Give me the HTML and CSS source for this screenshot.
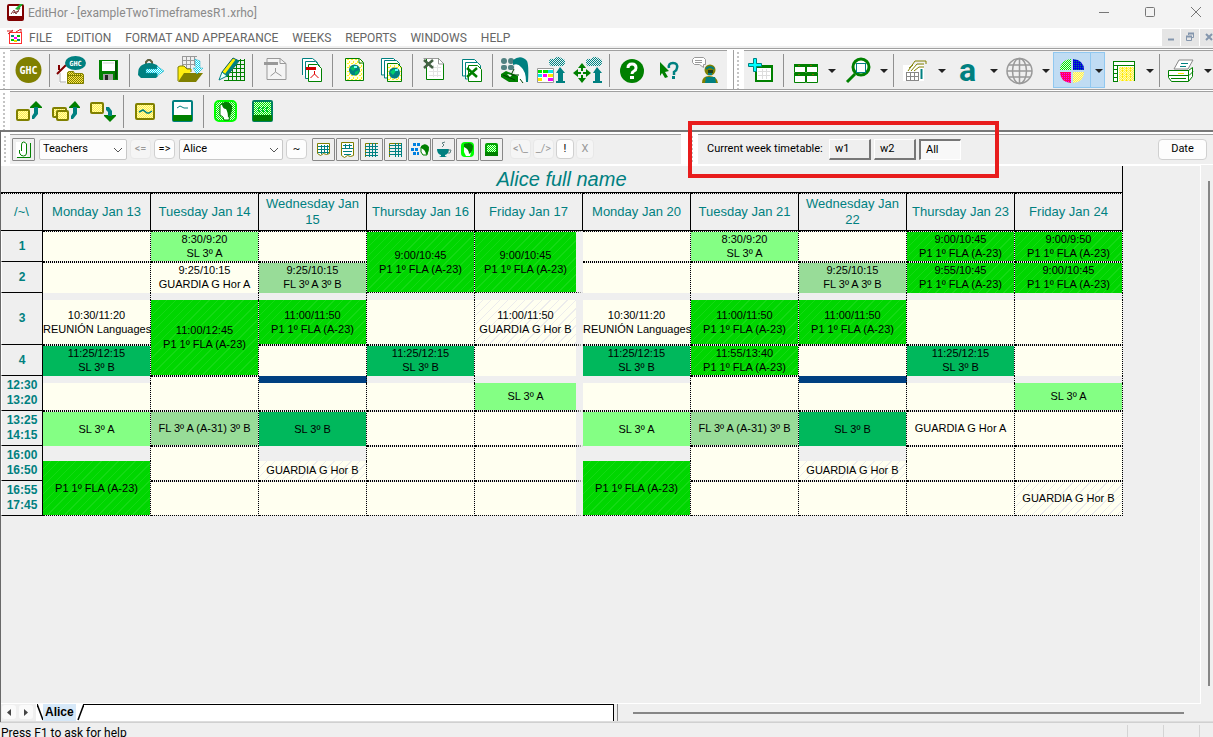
FILE: index.html
```html
<!DOCTYPE html>
<html lang="en">
<head>
<meta charset="utf-8">
<title>EditHor - [exampleTwoTimeframesR1.xrho]</title>
<link rel="stylesheet" href="styles.css">
</head>
<body>
<svg class="defs" width="0" height="0" aria-hidden="true">
  <defs>
    <pattern id="dy" width="2" height="2" patternUnits="userSpaceOnUse"><path fill="#fffbb0" d="M0 0h2v2H0z"/><path fill="#fff04a" d="M0 0h1v1H0zM1 1h1v1H1z"/></pattern>
    <pattern id="do" width="2" height="2" patternUnits="userSpaceOnUse"><path fill="#808000" d="M0 0h2v2H0z"/><path fill="#ffe84a" d="M0 0h1v1H0zM1 1h1v1H1z"/></pattern>
    <pattern id="dt" width="2" height="2" patternUnits="userSpaceOnUse"><path fill="#e8f4f4" d="M0 0h2v2H0z"/><path fill="#008080" d="M0 0h1v1H0zM1 1h1v1H1z"/></pattern>
    <pattern id="dc" width="2" height="2" patternUnits="userSpaceOnUse"><path fill="#ffffff" d="M0 0h2v2H0z"/><path fill="#00d8f0" d="M0 0h1v1H0zM1 1h1v1H1z"/></pattern>
    <pattern id="dg" width="2" height="2" patternUnits="userSpaceOnUse"><path fill="#d8ffd8" d="M0 0h2v2H0z"/><path fill="#00e000" d="M0 0h1v1H0zM1 1h1v1H1z"/></pattern>
    <pattern id="dn" width="2" height="2" patternUnits="userSpaceOnUse"><path fill="#0000e0" d="M0 0h2v2H0z"/><path fill="#008080" d="M0 0h1v1H0z"/></pattern>
    <pattern id="dr" width="2" height="2" patternUnits="userSpaceOnUse"><path fill="#ff0060" d="M0 0h2v2H0z"/><path fill="#ff00ff" d="M0 0h1v1H0z"/></pattern>
    <pattern id="page" width="4" height="4" patternUnits="userSpaceOnUse"><path fill="#ffffe0" d="M0 0h4v4H0z"/><path fill="#ffee20" d="M0 0h2v1H0zM2 2h1v2H2z"/></pattern>
  </defs>
</svg>

<header class="titlebar">
  <svg class="app-icon" width="17" height="17" viewBox="0 0 17 17"><rect x="1" y="1" width="15" height="15" rx="1" fill="#fff" stroke="#800000" stroke-width="2"/><path fill="#800000" d="M1 12h15v4H1z"/><path d="M4 10l3-4 2 4 4-6M6 9l6-2" stroke="#803030" fill="none"/><path d="M8 5l5-5h3l-5 6z" fill="#20b030"/></svg>
  <h1 class="title">EditHor - [exampleTwoTimeframesR1.xrho]</h1>
  <div class="window-buttons">
    <button aria-label="Minimize"><svg width="12" height="12" viewBox="0 0 12 12"><path d="M1 6.500h10" stroke="#777"/></svg></button>
    <button aria-label="Maximize"><svg width="12" height="12" viewBox="0 0 12 12"><rect x="1.500" y="1.500" width="9" height="9" rx="1" fill="none" stroke="#777"/></svg></button>
    <button aria-label="Close"><svg width="12" height="12" viewBox="0 0 12 12"><path d="M1 1l10 10M11 1L1 11" stroke="#777"/></svg></button>
  </div>
</header>

<nav class="menubar">
  <svg class="doc-icon" width="16" height="16" viewBox="0 0 16 16"><rect x="2.500" y="3.500" width="12" height="11" fill="#fff" stroke="#ff3030"/><path d="M0 2h6M1 5l5-4M9 3l5-3v3" stroke="#d02020" fill="none"/><path fill="#008080" d="M4 6h3v2H4zM10 10h3v2h-3z"/><path fill="#f0f" d="M7 8h3v2H7z"/><path fill="#00c000" d="M10 6h3v2h-3zM4 10h3v2H4z"/><path fill="#e8e000" d="M7 11h3v2H7z"/></svg>
  <a href="#file">FILE</a><a href="#edition">EDITION</a><a href="#format">FORMAT AND APPEARANCE</a><a href="#weeks">WEEKS</a><a href="#reports">REPORTS</a><a href="#windows">WINDOWS</a><a href="#help">HELP</a>
  <div class="mdi-buttons">
    <button aria-label="Minimize document"><svg width="10" height="10" viewBox="0 0 10 10"><path d="M2 7.500h6" stroke="#8496ad" stroke-width="2"/></svg></button>
    <button aria-label="Restore document"><svg width="10" height="10" viewBox="0 0 10 10"><path d="M3.500 3V1.500h5v4H7M1.500 4.500h5v4h-5z" fill="none" stroke="#8496ad"/><path d="M3 1.500h6M1 4.500h6" stroke="#8496ad" stroke-width="2"/></svg></button>
    <button aria-label="Close document"><svg width="10" height="10" viewBox="0 0 10 10"><path d="M2 2l6 6M8 2L2 8" stroke="#8496ad" stroke-width="2"/></svg></button>
  </div>
</nav>

<div class="toolbar">
  <div class="grip"></div>
  <div class="panel panel-main" role="toolbar" aria-label="Main">
    <button class="tool" aria-label="GHC"><svg width="31" height="30" viewBox="0 0 31 30"><circle cx="15.500" cy="15" r="13" fill="#808000"/><text x="15.500" y="19" class="ghc ghc-big">GHC</text></svg></button>
    <span class="sep"></span>
    <button class="tool" aria-label="Open GHC file"><svg width="31" height="30" viewBox="0 0 31 30"><path fill="#fff" d="M3 18l7-8 6 6v12H3z"/><path d="M1 19l9-9M3 10v5" stroke="#800000" stroke-width="2" fill="none"/><path d="M4 18v9h6" stroke="#aaa" fill="none"/><ellipse cx="19.500" cy="8" rx="10.500" ry="7" fill="#008080"/><text x="19.500" y="11" class="ghc">GHC</text><path d="M11.500 28.500v-11l1-1h5l1 2h8l1 1v9z" fill="url(#do)" stroke="#808000"/><path d="M11 20.500h14" stroke="#808000"/></svg></button>
    <button class="tool" aria-label="Save"><svg width="31" height="30" viewBox="0 0 31 30"><path fill="#008000" d="M6 5h19v20H7l-1-1z"/><path fill="#fff" d="M9 6h13v10H9z"/><path fill="#e8e8e8" d="M10 7h11v2H10z"/><path fill="#a0a0a0" d="M10 19h10v6H10z"/><path fill="#222" d="M12 20h3v5h-3z"/><path fill="#005000" d="M22 6h2v18h-2z"/></svg></button>
    <span class="sep"></span>
    <button class="tool" aria-label="Export bag"><svg width="31" height="30" viewBox="0 0 31 30"><path d="M10 10V7l2-2h2l2 2v3" fill="none" stroke="#606040" stroke-width="2"/><path fill="#008080" d="M6 10q7-4 15 0 2 3 1 11l-2 2H5l-3-3q0-8 4-10z"/><path fill="url(#dc)" stroke="#00a0b8" stroke-width=".5" d="M10 14h11v-3l7 5-7 5v-3H10z"/></svg></button>
    <button class="tool" aria-label="Import timetable"><svg width="31" height="30" viewBox="0 0 31 30"><path d="M9.500 1v13M13.500 1v13M17.500 1v13M21.500 1v10M9 1.500h15M9 5.500h13M9 9.500h13M9 13.500h8" stroke="#999" fill="none"/><path d="M5 26V12l2-1h4l3 3h4v3" fill="#ffee10" stroke="#808000"/><path fill="#808000" d="M5 27l6-9h19l-7 9z"/><path fill="url(#dc)" stroke="#20b0c8" stroke-width=".5" d="M22 4l5 2v7h3l-6 6-4-6h3z"/></svg></button>
    <span class="sep"></span>
    <button class="tool" aria-label="Edit timetable"><svg width="31" height="30" viewBox="0 0 31 30"><path d="M12.500 26V12M16.500 26V8M20.500 26V6M24.500 26V4M28.500 26V4M8 25.500h21M9 21.500h20M12 17.500h17M15 13.500h14M18 9.500h11M20 5.500h9" stroke="#008000" fill="none"/><path fill="#ffee00" stroke="#006060" d="M6 17L17 3l6 3-12 15z"/><path fill="#008080" d="M9 19L20 4l3 2-12 15z"/><path fill="#e8ffff" stroke="#008080" d="M6 17l5 4-8 4z"/></svg></button>
    <span class="sep"></span>
    <button class="tool" aria-label="Export PDF"><svg width="31" height="30" viewBox="0 0 31 30"><path d="M8 3.500h13l6 5v16H8z" fill="#f4f4f4" stroke="#999"/><path d="M21 3.500v5h6" fill="none" stroke="#999"/><path fill="#999" d="M5 7h14v3H5z"/><path d="M16.500 13v4l-5 4M16.500 17l6 4" stroke="#999" fill="none"/></svg></button>
    <button class="tool" aria-label="Export several PDF"><svg width="31" height="30" viewBox="0 0 31 30"><path d="M6.500 20V3.500h10l5 4v14h-12" fill="#fff" stroke="#008080"/><path d="M9.500 23V6.500h10l4 4v13h-14z" fill="#fff" stroke="#008080"/><path d="M12.500 9.500h9l4 4v13h-13z" fill="#fff" stroke="#008000"/><path fill="#d00000" d="M10 12h10v3H10z"/><path d="M18.500 16v3l-4 4M18.500 19l4 4" stroke="#e00000" fill="none"/></svg></button>
    <span class="sep"></span>
    <button class="tool" aria-label="Export web page"><svg width="31" height="30" viewBox="0 0 31 30"><path d="M6.500 3.500h14l4 4v18h-18z" fill="url(#page)" stroke="#008000"/><path d="M20 4v4h4" fill="#fff" stroke="#008000"/><circle cx="15.500" cy="15" r="5.500" fill="#008080"/><path fill="#00c060" d="M11 13l4-2 2 2-3 3zM16 17l4-2-1 3-3 2z"/><path fill="#80ffff" d="M15 11h3v2h-3z"/></svg></button>
    <button class="tool" aria-label="Export several web pages"><svg width="31" height="30" viewBox="0 0 31 30"><path d="M5.500 20V3.500h12l3 3v13z" fill="#fff" stroke="#008080"/><path d="M8.500 23V5.500h12l3 3v14z" fill="#fff" stroke="#008080"/><path d="M11.500 8.500h10l4 4v14h-14z" fill="url(#page)" stroke="#008000"/><circle cx="18.500" cy="18" r="5.500" fill="#008080"/><path fill="#00d070" d="M14 17l4-3 2 2-3 4z"/><path fill="#60ffff" d="M19 14h3v2h-3z"/></svg></button>
    <span class="sep"></span>
    <button class="tool" aria-label="Export spreadsheet"><svg width="31" height="30" viewBox="0 0 31 30"><path d="M7.500 3.500h12l5 5v16h-17z" fill="#fff" stroke="#008000"/><path d="M4.500 3.500h15l5 5" fill="none" stroke="#999"/><path d="M19.500 4v5h5" fill="none" stroke="#999"/><path d="M10 12.500h12M10 16.500h12M10 20.500h12M14.500 10v12M18.500 10v12" stroke="#e4e4e4"/><path d="M5 5l9 8M14 5l-9 8" stroke="#446044" stroke-width="2.500"/></svg></button>
    <button class="tool" aria-label="Export several spreadsheets"><svg width="31" height="30" viewBox="0 0 31 30"><path d="M6.500 21V4.500h12l3 3v13z" fill="#fff" stroke="#008080"/><path d="M9.500 24V7.500h12l3 3v13z" fill="#fff" stroke="#008080"/><path d="M12.500 26.500v-16h9l4 4v12z" fill="#fff" stroke="#008000"/><path d="M11 13l10 9M21 13l-10 9" stroke="#008000" stroke-width="2.500"/></svg></button>
    <span class="sep"></span>
    <button class="tool" aria-label="Teachers"><svg width="31" height="30" viewBox="0 0 31 30"><g fill="#508080"><circle cx="5" cy="6" r="3"/><circle cx="12" cy="6" r="3"/><rect x="2" y="10" width="6" height="5" rx="2"/><rect x="9" y="10" width="6" height="5" rx="2"/></g><path fill="#fff" d="M16 6l6-2 6 10v13H16z"/><path fill="#008080" d="M14 5q8-6 14 1 2 4 1 21h-2q0-11-5-15-3-4-8-2z"/><path fill="#008000" d="M2 19l5-3 12 5v6H10l-8-5z"/><path d="M4 20l12 5M15 14l-3 6h8M21 24l3 4" stroke="#004000" fill="none"/><path fill="#fff" d="M8 19l5 1-2 2z"/></svg></button>
    <button class="tool" aria-label="Upload timetable"><svg width="31" height="30" viewBox="0 0 31 30"><path fill="#fff" stroke="#999" d="M1.500 13.500h16v14h-16z"/><path fill="#00e000" d="M2 15h4v3H2zM7 15h5v3H7z"/><path fill="#00e8e8" d="M12 15h5v3h-5zM2 19h4v3H2z"/><path fill="#f0f" d="M7 19h4v3H7zM12 23h5v3h-5z"/><path fill="#ffe800" d="M12 19h5v3h-5zM2 23h4v3H2z"/><path fill="url(#dt)" d="M13 7q0-4 5-3 4-4 7-1 5 1 4 5-1 4-6 3h-5q-5 1-5-4z"/><path fill="#008080" d="M24 12l5 6h-2v8h2v2h-9v-2h2v-8h-2z"/></svg></button>
    <button class="tool" aria-label="Upload assignment"><svg width="31" height="30" viewBox="0 0 31 30"><g fill="#008000"><path d="M9 8l4 5h-3v3H8v-3H5z"/><path d="M9 28l4-5h-3v-3H8v3H5z"/><path d="M0 18l5-4v3h3v2H5v3z"/><path d="M18 18l-5-4v3h-3v2h3v3z"/></g><path fill="url(#dt)" d="M13 7q0-4 5-3 4-4 7-1 5 1 4 5-1 4-6 3h-5q-5 1-5-4z"/><path fill="#008080" d="M24 12l5 6h-2v8h2v2h-9v-2h2v-8h-2z"/></svg></button>
    <span class="sep"></span>
    <button class="tool" aria-label="Help"><svg width="31" height="30" viewBox="0 0 31 30"><circle cx="16" cy="16" r="12" fill="#008000"/><path d="M12 13q0-4 4-4t4 4q0 2-2 3t-2 3" fill="none" stroke="#fff" stroke-width="3"/><path fill="#fff" d="M14 21h4v3h-4z"/></svg></button>
    <button class="tool" aria-label="Context help"><svg width="31" height="30" viewBox="0 0 31 30"><path fill="#008000" d="M7 7l9 9-4 1 3 5-3 1-3-5-2 3z"/><path d="M16 13q-1-5 4-5t4 5q0 2-3 4v3" fill="none" stroke="#008080" stroke-width="2.500"/><path fill="#008080" d="M19 21h3v3h-3z"/></svg></button>
    <button class="tool" aria-label="Support"><svg width="31" height="30" viewBox="0 0 31 30"><path fill="#fff" stroke="#999" d="M4.500 2.500h9l2 2v5h-2v3l-4-3h-5l-2-2v-3z"/><path d="M5 5.500h7M5 7.500h7" stroke="#999"/><circle cx="20" cy="15" r="5.500" fill="#808000"/><path d="M16 14q4-4 8 0M18 19h4" stroke="#008080" stroke-width="2" fill="none"/><path fill="#204020" d="M18 15h5v3h-5z"/><path fill="#808000" d="M12 28q0-7 7-7 8 0 9 7z"/><path fill="#008080" d="M16 22h9l1 6H15z"/></svg></button>
  </div>
  <div class="grip grip-second"></div>
  <div class="panel panel-wide" role="toolbar" aria-label="View">
    <button class="tool" aria-label="New timetable"><svg width="31" height="30" viewBox="0 0 31 30"><rect x="9" y="11" width="16" height="15" fill="#fff" stroke="#008000" stroke-width="2"/><path fill="#008000" d="M8 10h18v3H8z"/><path d="M11 16.500h12M11 20.500h12M15.500 14v10M19.500 14v10" stroke="#ddd"/><path fill="#00ffff" stroke="#008080" d="M6.500 3.500h3v5h5v3h-5v5h-3v-5h-5v-3h5z"/></svg></button>
    <span class="sep"></span>
    <span class="split"><button class="tool" aria-label="Window layout"><svg width="31" height="30" viewBox="0 0 31 30"><g fill="#fff" stroke="#008000"><path d="M4.500 9.500h11v8h-11zM16.500 9.500h11v8h-11zM4.500 19.500h11v8h-11zM16.500 19.500h11v8h-11z"/></g><path fill="#008000" d="M4 9h24v3H4zM4 18h24v3H4z"/><path fill="#806000" d="M8 10h2v1H8zM20 10h2v1h-2zM8 19h2v1H8zM22 19h2v1h-2z"/></svg></button><button class="arrow" aria-label="Window layout options"></button></span>
    <span class="split"><button class="tool" aria-label="Zoom"><svg width="31" height="30" viewBox="0 0 31 30"><circle cx="19" cy="12" r="8" fill="#fff" stroke="#008000" stroke-width="3"/><rect x="14.500" y="8.500" width="9" height="9" fill="#fff" stroke="#008080"/><path d="M13 19l-8 8" stroke="#008000" stroke-width="3"/></svg></button><button class="arrow" aria-label="Zoom options"></button></span>
    <span class="sep"></span>
    <span class="split"><button class="tool" aria-label="Properties"><svg width="31" height="30" viewBox="0 0 31 30"><path fill="#fff" d="M3 10h21v16H3z"/><path d="M6.500 17v9M10.500 17v9M14.500 17v9M18.500 17v9M6 17.500h13M6 21.500h13M6 25.500h13" stroke="#888"/><path d="M21.500 14v10" stroke="#008080" stroke-width="2"/><path d="M8 16l7-10h11M11 16l6-7h7M14 16l5-4h5M9 13l4-3M26 6v3" fill="none" stroke="#808000"/></svg></button><button class="arrow" aria-label="Properties options"></button></span>
    <span class="split"><button class="tool" aria-label="Font"><svg width="31" height="30" viewBox="0 0 31 30"><text x="15.500" y="26" class="letter">a</text></svg></button><button class="arrow" aria-label="Font options"></button></span>
    <span class="split"><button class="tool" aria-label="Language"><svg width="31" height="30" viewBox="0 0 31 30"><g fill="none" stroke="#999" stroke-width="1.500"><circle cx="15.500" cy="16" r="12.500"/><ellipse cx="15.500" cy="16" rx="7" ry="12.500"/><path d="M15.500 3v26M3 16h25M5 10h21M5 22h21"/></g></svg></button><button class="arrow" aria-label="Language options"></button></span>
    <span class="split split-active"><button class="tool" aria-label="Colours"><svg width="31" height="30" viewBox="0 0 31 30"><path fill="url(#dg)" d="M15 15H4Q4 5 15 4z"/><path fill="url(#dn)" d="M17 15h11Q28 5 17 4z"/><path fill="url(#dr)" d="M15 17H4q0 10 11 11z"/><path fill="url(#dy)" d="M17 17h11q0 10-11 11z"/></svg></button><button class="arrow" aria-label="Colours options"></button></span>
    <span class="split"><button class="tool" aria-label="Columns"><svg width="31" height="30" viewBox="0 0 31 30"><path fill="#fff" d="M5 6h22v20H5z"/><path fill="url(#dy)" d="M11 12h15v14H11z"/><path d="M14.500 12v14M18.500 12v14M22.500 12v14" stroke="#ffe800" stroke-dasharray="2 1"/><path d="M5 6.500h22M5 10.500h22M5.500 6v20M9.500 10v16M26.500 6v20M5 14.500h4M5 18.500h4M5 22.500h4M5 26.500h5" stroke="#008000" fill="none"/></svg></button><button class="arrow" aria-label="Columns options"></button></span>
    <span class="sep"></span>
    <span class="split"><button class="tool" aria-label="Print"><svg width="31" height="30" viewBox="0 0 31 30"><path fill="#fff" stroke="#888" d="M8 14l5-9h14l-5 9z"/><path d="M15 8.500h7M14 11.500h6" stroke="#008080"/><path fill="#fff" stroke="#008000" d="M2.500 15.500h20l4-3v9l-4 5h-17l-3-4z"/><path d="M3 15.500h20M3 20.500h20l4-4M22.500 16v10M5 23.500h15" stroke="#008000" fill="none"/><path fill="#ffe800" d="M12 18h6v1h-6z"/></svg></button><button class="arrow" aria-label="Print options"></button></span>
  </div>
</div>

<div class="toolbar">
  <div class="grip"></div>
  <div class="panel panel-wide" role="toolbar" aria-label="Sessions">
    <button class="tool" aria-label="Raise session"><svg width="31" height="30" viewBox="0 0 31 30"><rect x="4" y="14" width="12" height="10" rx="1" fill="url(#dy)" stroke="#808000" stroke-width="2"/><path fill="#008000" d="M23 5l6 6v1H17v-1z"/><path fill="#008080" d="M21 11h4v7l-4 5h-2v-3l2-3z"/></svg></button>
    <button class="tool" aria-label="Raise group"><svg width="31" height="30" viewBox="0 0 31 30"><rect x="3" y="12" width="13" height="9" rx="1" fill="url(#dy)" stroke="#808000" stroke-width="2"/><rect x="7" y="15" width="11" height="9" rx="1" fill="url(#dy)" stroke="#808000" stroke-width="2"/><path fill="#008000" d="M25 5l5 6v1H19v-1z"/><path fill="#008080" d="M23 11h4v7l-4 5h-2v-3l2-3z"/></svg></button>
    <button class="tool" aria-label="Lower session"><svg width="31" height="30" viewBox="0 0 31 30"><rect x="4" y="7" width="12" height="10" rx="1" fill="url(#dy)" stroke="#808000" stroke-width="2"/><path fill="#008000" d="M23 26l6-6v-1H17v1z"/><path fill="#008080" d="M19 11h3l3 4v5h-4v-4l-2-2z"/></svg></button>
    <span class="sep"></span>
    <button class="tool" aria-label="Mark session"><svg width="31" height="30" viewBox="0 0 31 30"><rect x="6" y="8" width="18" height="15" rx="1" fill="url(#dy)" stroke="#808000" stroke-width="2"/><path d="M9 16l4-2 4 3h2l3-2" stroke="#008080" stroke-width="1.500" fill="none"/></svg></button>
    <button class="tool" aria-label="Session card"><svg width="31" height="30" viewBox="0 0 31 30"><rect x="6" y="5" width="19" height="20" rx="1" fill="#fff" stroke="#008080" stroke-width="2"/><path fill="#008000" d="M6 19h19v6H6z"/><path d="M10 12l3-2 4 2h4" stroke="#008080" fill="none"/></svg></button>
    <span class="sep"></span>
    <button class="tool" aria-label="Teacher view"><svg width="31" height="30" viewBox="0 0 31 30"><rect x="5" y="5" width="21" height="20" rx="4" fill="url(#dg)" stroke="#00ff00" stroke-width="2"/><path fill="#fff" stroke="#008000" d="M10 9l6-3 5 8-2 10h-5l-1-3-3-2z"/><path fill="#008000" d="M11 8q8-5 11 2 1 6-4 12 0-6-2-9-3 0-4-4z"/></svg></button>
    <button class="tool" aria-label="Room view"><svg width="31" height="30" viewBox="0 0 31 30"><rect x="6" y="5" width="19" height="20" rx="1" fill="url(#dg)" stroke="#008060" stroke-width="2"/><path fill="#008000" d="M6 19h19v6H6z"/><path d="M9 11l2 2 2-2 2 2 2-2 2 2 2-2M9 16l2-2 2 2 2-2 2 2 2-2 2 2" stroke="#00c040" fill="none"/></svg></button>
  </div>
</div>

<div class="viewbar">
  <div class="grip"></div>
  <div class="view-panel view-main">
    <button class="boxed clip" aria-label="Attach"><svg width="21" height="21" viewBox="0 0 21 21"><path fill="#fff" d="M3 3h11v15H3z"/><path d="M17.500 4v14.500H4" stroke="#008000" fill="none"/><path d="M6.500 11v3q1 3 4 3t3-3V5q-1-2-3-2t-2 3v6" stroke="#008000" fill="none"/></svg></button>
    <span class="combo combo-kind"><select aria-label="Kind"><option>Teachers</option></select><svg width="10" height="6" viewBox="0 0 10 6"><path d="M1 1l4 4 4-4" fill="none" stroke="#555"/></svg></span>
    <button class="key" disabled>&lt;=</button>
    <button class="key">=&gt;</button>
    <span class="combo combo-name"><select aria-label="Teacher"><option>Alice</option></select><svg width="10" height="6" viewBox="0 0 10 6"><path d="M1 1l4 4 4-4" fill="none" stroke="#555"/></svg></span>
    <button class="key">~</button>
    <div class="view-icons">
      <button class="boxed" aria-label="Weekly grid"><svg width="21" height="21" viewBox="0 0 21 21"><path fill="#fff" stroke="#808000" d="M4.500 4.500h12v10l-3 1-3-1-3 2-3-2z"/><path d="M5 7.500h11M5 10.500h11M5 13.500h11M8.500 6v9M11.500 6v8M14.500 6v9" stroke="#008080"/></svg></button>
      <button class="boxed" aria-label="Weekly list"><svg width="21" height="21" viewBox="0 0 21 21"><path fill="#fff" stroke="#808000" d="M4.500 3.500h12v13l-3 1-3-1-3 2-3-2z"/><path d="M6 6.500h9M5 9.500h11M6 12.500h9M7 15.500h7M8.500 5v5M12.500 5v5" stroke="#008080"/></svg></button>
      <button class="boxed" aria-label="Columns grid"><svg width="21" height="21" viewBox="0 0 21 21"><path d="M4.500 18V4.500H17" stroke="#808000" fill="none"/><path d="M8.500 4v14M11.500 4v14M14.500 4v14M4 7.500h13M4 10.500h13M4 13.500h13M4 16.500h13" stroke="#008080"/></svg></button>
      <button class="boxed" aria-label="Rows grid"><svg width="21" height="21" viewBox="0 0 21 21"><path d="M4.500 18V4.500H17" stroke="#808000" fill="none"/><path d="M10.500 4v14M16.500 4v14M4 6.500h13M4 9.500h13M4 12.500h13M4 15.500h13M13.500 4v14" stroke="#008080"/></svg></button>
      <button class="boxed" aria-label="Groups"><svg width="21" height="21" viewBox="0 0 21 21"><path fill="#0080e0" d="M4 4h3v3H4zM8 4h3v3H8zM2 9h3v3H2zM6 9h3v3H6zM4 13h3v3H4zM8 13h2v3H8z"/><path fill="#fff" stroke="#008000" d="M12 8l4-2 3 4-1 6h-4l-2-3z"/><path fill="#008000" d="M12 7q5-4 8 1 0 6-3 8 0-5-5-7z"/></svg></button>
      <button class="boxed" aria-label="Breaks"><svg width="21" height="21" viewBox="0 0 21 21"><path fill="#008080" d="M4 10h12q0 5-4 6v1l2 1H6l2-1v-1q-4-1-4-6z"/><path d="M15 11h3l-1 3h-2M9 8l2-2-2-2 3-1" stroke="#608080" fill="none"/></svg></button>
      <button class="boxed" aria-label="Teachers view"><svg width="21" height="21" viewBox="0 0 21 21"><rect x="4" y="3" width="13" height="15" rx="4" fill="#00ff00"/><path fill="#fff" d="M7 6l4-2 4 6-2 7h-4l-2-4z"/><path fill="#008000" d="M7 5q7-3 9 2 0 6-4 8 0-5-5-7z"/></svg></button>
      <button class="boxed" aria-label="Rooms view"><svg width="21" height="21" viewBox="0 0 21 21"><rect x="5" y="5" width="11" height="11" rx="1" fill="url(#dg)" stroke="#00a000" stroke-width="2"/><path fill="#008000" d="M4 13h13v4H4z"/></svg></button>
    </div>
    <div class="view-keys">
      <button class="key" disabled>&lt;\_</button>
      <button class="key" disabled>_/&gt;</button>
      <button class="key key-narrow">!</button>
      <button class="key key-narrow" disabled>X</button>
    </div>
  </div>
  <div class="grip grip-weeks"></div>
  <div class="view-panel view-weeks">
    <div class="weeks" role="group" aria-labelledby="weeks-label">
      <span id="weeks-label">Current week timetable:</span>
      <button class="week">w1</button>
      <button class="week">w2</button>
      <button class="week week-on" aria-pressed="true">All</button>
      <div class="highlight"></div>
    </div>
    <button class="date">Date</button>
  </div>
</div>

<main class="workspace">
  <div class="sheet">
    <table class="timetable">
      <colgroup><col class="col-label"><col><col><col><col><col><col><col><col><col><col></colgroup>
      <thead>
        <tr><th class="owner" colspan="11">Alice full name</th></tr>
        <tr class="days"><th>/~\</th><th>Monday Jan 13</th><th>Tuesday Jan 14</th><th>Wednesday Jan 15</th><th>Thursday Jan 16</th><th>Friday Jan 17</th><th>Monday Jan 20</th><th>Tuesday Jan 21</th><th>Wednesday Jan 22</th><th>Thursday Jan 23</th><th>Friday Jan 24</th></tr>
      </thead>
      <tbody>
        <tr class="h31"><th>1</th><td></td><td class="sl-a">8:30/9:20<br>SL 3º A</td><td></td><td class="p1" rowspan="2">9:00/10:45<br>P1 1º FLA (A-23)</td><td class="p1 week-end" rowspan="2">9:00/10:45<br>P1 1º FLA (A-23)</td><td></td><td class="sl-a">8:30/9:20<br>SL 3º A</td><td></td><td class="p1">9:00/10:45<br>P1 1º FLA (A-23)</td><td class="p1">9:00/9:50<br>P1 1º FLA (A-23)</td></tr>
        <tr class="h31 before-break"><th>2</th><td></td><td>9:25/10:15<br>GUARDIA G Hor A</td><td class="fl">9:25/10:15<br>FL 3º A 3º B</td><td></td><td></td><td class="fl">9:25/10:15<br>FL 3º A 3º B</td><td class="p1">9:55/10:45<br>P1 1º FLA (A-23)</td><td class="p1">9:00/10:45<br>P1 1º FLA (A-23)</td></tr>
        <tr class="h7"><th rowspan="2">3</th><td class="break"></td><td class="break"></td><td class="break"></td><td class="break"></td><td class="break week-end"></td><td class="break"></td><td class="break"></td><td class="break"></td><td class="break"></td><td class="break"></td></tr>
        <tr class="h45 after-break"><td>10:30/11:20<br>REUNIÓN Languages</td><td class="p1" rowspan="2">11:00/12:45<br>P1 1º FLA (A-23)</td><td class="p1">11:00/11:50<br>P1 1º FLA (A-23)</td><td></td><td class="guard week-end">11:00/11:50<br>GUARDIA G Hor B</td><td>10:30/11:20<br>REUNIÓN Languages</td><td class="p1">11:00/11:50<br>P1 1º FLA (A-23)</td><td class="p1">11:00/11:50<br>P1 1º FLA (A-23)</td><td></td><td></td></tr>
        <tr class="h31 before-break"><th>4</th><td class="sl-b">11:25/12:15<br>SL 3º B</td><td></td><td class="sl-b">11:25/12:15<br>SL 3º B</td><td class="week-end"></td><td class="sl-b">11:25/12:15<br>SL 3º B</td><td class="p1 ruled">11:55/13:40<br>P1 1º FLA (A-23)</td><td></td><td class="sl-b">11:25/12:15<br>SL 3º B</td><td></td></tr>
        <tr class="h7"><th rowspan="2">12:30<br>13:20</th><td class="break"></td><td rowspan="2"></td><td class="break lunch"></td><td class="break"></td><td class="break week-end"></td><td class="break"></td><td rowspan="2"></td><td class="break lunch"></td><td class="break"></td><td class="break"></td></tr>
        <tr class="h28 after-break"><td></td><td></td><td></td><td class="sl-a week-end">SL 3º A</td><td></td><td></td><td></td><td class="sl-a">SL 3º A</td></tr>
        <tr class="h35"><th>13:25<br>14:15</th><td class="sl-a open">SL 3º A</td><td class="fl">FL 3º A (A-31) 3º B</td><td class="sl-b open">SL 3º B</td><td></td><td class="week-end"></td><td class="sl-a open">SL 3º A</td><td class="fl">FL 3º A (A-31) 3º B</td><td class="sl-b open">SL 3º B</td><td>GUARDIA G Hor A</td><td></td></tr>
        <tr class="h15"><th rowspan="2">16:00<br>16:50</th><td class="break"></td><td rowspan="2"></td><td class="break"></td><td rowspan="2"></td><td class="week-end" rowspan="2"></td><td class="break"></td><td rowspan="2"></td><td class="break"></td><td rowspan="2"></td><td rowspan="2"></td></tr>
        <tr class="h20 after-break"><td class="p1" rowspan="2">P1 1º FLA (A-23)</td><td class="guard">GUARDIA G Hor B</td><td class="p1" rowspan="2">P1 1º FLA (A-23)</td><td class="guard">GUARDIA G Hor B</td></tr>
        <tr class="h35"><th>16:55<br>17:45</th><td></td><td></td><td></td><td class="week-end"></td><td></td><td></td><td></td><td class="guard">GUARDIA G Hor B</td></tr>
      </tbody>
    </table>
  </div>
  <div class="vscroll"><div class="vthumb"></div></div>
  <div class="sheetbar">
    <div class="tabs">
      <button class="tab-nav" aria-label="Previous sheet"><svg width="4" height="7" viewBox="0 0 4 7"><path fill="#444" d="M4 0v7L0 3.500z"/></svg></button>
      <button class="tab-nav" aria-label="Next sheet"><svg width="4" height="7" viewBox="0 0 4 7"><path fill="#444" d="M0 0v7l4-3.500z"/></svg></button>
      <div class="tab-strip">
        <svg class="slant" width="6" height="17" viewBox="0 0 6 17"><path d="M0 0l6 16" stroke="#000" stroke-width="1.500"/></svg>
        <button class="tab">Alice</button>
        <svg class="slant" width="7" height="17" viewBox="0 0 7 17"><path d="M7 0L1 16" stroke="#000" stroke-width="1.500"/></svg>
        <div class="tab-rest"></div>
      </div>
    </div>
    <div class="hscroll"><div class="hthumb"></div></div>
  </div>
</main>

<footer class="status"><span class="status-text">Press F1 to ask for help</span><span class="status-cell"></span><span class="status-cell"></span><span class="status-cell status-last"></span></footer>
</body>
</html>
```
FILE: styles.css
```css
* { box-sizing: border-box; }

body {
  margin: 0;
  height: 100vh;
  display: flex;
  flex-direction: column;
  overflow: hidden;
  background: #efefef;
  color: #000;
  font: 11px/14px Roboto, "Noto Sans", sans-serif;
}

button {
  margin: 0;
  padding: 0;
  border: 0;
  background: none;
  color: inherit;
  font: inherit;
}

svg { display: block; }
.defs { position: absolute; }

/* Title bar and menu */
.titlebar {
  display: flex;
  align-items: center;
  flex: none;
  height: 28px;
  padding: 0 0 4px 7px;
  background: #f3f3f3;
}
.title {
  margin: 2px 0 0 4px;
  flex: 1;
  font-size: 12px;
  font-weight: 400;
  color: #8a8a8a;
}
.window-buttons { display: flex; }
.window-buttons button { width: 46px; padding-left: 17px; }
.window-buttons button:last-child { width: 40px; }

.menubar {
  display: flex;
  align-items: center;
  flex: none;
  gap: 14px;
  height: 20px;
  padding-left: 7px;
  background: #fff;
  border-bottom: 2px solid #f0f0f0;
  font-size: 12px;
}
.menubar a { padding-top: 2px; color: #666; text-decoration: none; }
.doc-icon { margin-right: -8px; }
.mdi-buttons { display: flex; gap: 1px; margin-left: auto; }
.mdi-buttons button {
  width: 18px;
  height: 17px;
  padding-left: 4px;
  background: #e5e5e5;
}
.mdi-buttons button:last-child { width: 13px; overflow: hidden; }

/* Icon toolbars */
.toolbar {
  display: flex;
  flex: none;
  padding-top: 1px;
  border-top: 1px solid #a0a0a0;
  background: #fff;
}
.grip {
  flex: none;
  width: 10px;
  padding-left: 3px;
  background: radial-gradient(circle at 1px 1px, #c4c4c4 1px, transparent 1px) 3px 2px / 7px 4px repeat-y;
}
.panel {
  display: flex;
  align-items: center;
  flex: none;
  height: 39px;
  border-top: 1px solid #a0a0a0;
  background: #efefef;
}
.panel-main { padding-right: 3px; }
.panel-wide { flex: 1 1 0; min-width: 0; overflow: hidden; }
.grip-second {
  width: 11px;
  margin-left: 6px;
  border-left: 1px solid #a0a0a0;
}
.tool { flex: none; width: 37px; height: 36px; padding-left: 3px; }
.sep { flex: none; width: 1px; height: 33px; margin: 0 3px 0 2px; background: #909090; }
.split { display: flex; flex: none; }
.arrow { width: 15px; height: 36px; }
.arrow::after {
  content: "";
  display: block;
  width: 0;
  margin: 1px auto 0 4px;
  border: 4px solid transparent;
  border-top-color: #222;
  border-bottom: 0;
}
.split-active { outline: 1px solid #90c8f0; outline-offset: -1px; background: #c0dcf3; }
.split-active .arrow { border-left: 1px solid #90c8f0; }
.ghc {
  fill: #fff;
  font: bold 7px/1 "DejaVu Sans Mono", monospace;
  text-anchor: middle;
}
.ghc-big { font-size: 10px; }
.letter {
  fill: #008080;
  font: bold 32px/1 Roboto, sans-serif;
  text-anchor: middle;
}

/* View bar */
.viewbar {
  display: flex;
  flex: none;
  height: 35px;
  padding: 2px 0 1px 0;
  border-top: 2px solid #787878;
  border-left: 1px solid #696969;
  background: #fff;
}
.view-panel {
  display: flex;
  align-items: center;
  padding-bottom: 1px;
  border-top: 1px solid #a0a0a0;
  background: #efefef;
}
.viewbar .grip { width: 9px; }
.viewbar .grip-weeks { width: 7px; margin-left: 10px; background-position: 0 2px; }
.view-main { flex: none; width: 671px; gap: 3px; padding-left: 2px; }
.view-weeks { flex: 1; justify-content: space-between; padding-right: 6px; padding-left: 9px; }
.boxed {
  width: 23px;
  height: 23px;
  border: 1px solid #888;
  border-radius: 1px;
  background: #f0f0f0;
}
.clip { margin-right: 1px; }
.combo { position: relative; }
.combo-kind { width: 88px; }
.combo-name { width: 104px; margin-left: 1px; }
.combo select {
  display: block;
  width: 100%;
  height: 21px;
  padding: 0 3px;
  border: 1px solid #c8c8c8;
  border-radius: 2px;
  appearance: none;
  background: #fdfdfd;
  color: #000;
  font: inherit;
}
.combo svg { position: absolute; right: 4px; top: 8px; pointer-events: none; }
.key {
  width: 21px;
  height: 20px;
  border: 1px solid #d0d0d0;
  border-radius: 4px;
  background: #fdfdfd;
}
.key:disabled { border-color: #e8e8e8; background: #f5f5f5; color: #999; }
.key-narrow { width: 18px; }
.view-icons { display: flex; gap: 1px; margin-left: 2px; }
.view-keys { display: flex; gap: 2px; margin-left: 4px; }
.weeks { position: relative; display: flex; align-items: center; gap: 3px; }
.weeks span { width: 119px; white-space: nowrap; }
.week {
  width: 42px;
  height: 21px;
  padding-left: 5px;
  border: 1px solid #fff;
  border-right: 2px solid #777;
  border-bottom: 2px solid #777;
  text-align: left;
}
.week-on {
  border: 1px solid #fff;
  border-top: 2px solid #777;
  border-left: 2px solid #777;
  background: #f8f8f8;
}
.highlight {
  position: absolute;
  left: -19px;
  top: -18px;
  width: 311px;
  height: 57px;
  border: 4px solid #e81c1c;
  pointer-events: none;
}
.date {
  width: 49px;
  height: 21px;
  border: 1px solid #d0d0d0;
  border-radius: 4px;
  background: #fdfdfd;
}

/* Timetable */
.workspace {
  display: grid;
  grid-template: minmax(0, 1fr) 18px / minmax(0, 1fr) 12px;
  flex: 1;
  min-height: 0;
  border-left: 1px solid #696969;
}
.sheet { border: 1px solid #fff; border-left: 0; overflow: hidden; }
.timetable {
  width: calc(100% - 77px);
  table-layout: fixed;
  border-spacing: 0;
  font: 11px/14px "Liberation Sans", Arial, sans-serif;
}
.col-label { width: 42px; }
th, td { padding: 0; text-align: center; vertical-align: middle; }
th {
  border-right: 1px solid #000;
  border-bottom: 1px solid #000;
  color: #008080;
}
.owner { height: 27px; font-size: 20px; font-style: italic; font-weight: 400; line-height: 24px; }
.days th { height: 38px; border-top: 1px dotted #000; font-size: 13px; font-weight: 400; line-height: 16px; }
tbody th { border-left: 1px solid #fff; font-size: 12px; line-height: 15px; }
td {
  padding-bottom: 1px;
  border: 1px dotted #000;
  border-left: 0;
  background: #fffff0;
  background-clip: padding-box;
  white-space: nowrap;
}
.before-break td:not([rowspan]):not(.ruled) { padding-bottom: 2px; border-bottom: 0; }
.after-break td { border-top: 0; }
td.open { border-bottom: 0; }
td.break { padding: 0; border-top: 0; border-bottom: 0; background: #efefef; }
td.lunch { background: #004080; }
td.week-end, .before-break td.week-end { border-right: 7px solid #efefef; }
.h31 { height: 31px; }
.h7 { height: 7px; }
.h45 { height: 45px; }
.h28 { height: 28px; }
.h35 { height: 35px; }
.h15 { height: 15px; }
.h20 { height: 20px; }
.sl-a { background-color: #84ff84; }
.sl-b { background-color: #00b85c; }
.fl { background-color: #98dc98; }
.p1 { background-image: repeating-linear-gradient(135deg, #00d600 0 5px, #14da14 5px 6px); }
.guard { background-image: repeating-linear-gradient(135deg, #fffff0 0 5px, #ececec 5px 6px); }

/* Scroll bars and sheet tabs */
.vscroll { padding: 16px 0 18px 7px; }
.vthumb { width: 2px; height: 100%; background: #868686; }
.sheetbar { display: flex; grid-column: 1 / -1; border-bottom: 1px solid #ddd; }
.tabs { display: flex; width: 613px; border-right: 1px solid #000; }
.tab-nav {
  display: flex;
  align-items: center;
  justify-content: center;
  width: 14px;
  height: 14px;
  margin: 1px 2px 0 1px;
  border-radius: 3px;
  background: #fafafa;
}
.tab-strip { display: flex; flex: 1; margin-left: 1px; background: #fff; }
.slant { flex: none; margin-left: 1px; }
.tab {
  padding: 0 2px;
  background: #d6e8f8;
  font: bold 12px/17px "Liberation Sans", Arial, sans-serif;
}
.tab-rest { flex: 1; border-top: 1px solid #000; }
.hscroll {
  display: flex;
  align-items: center;
  flex: 1;
  margin-left: 3px;
  padding: 0 29px 0 15px;
  border-left: 1px solid #888;
}
.hthumb { width: 100%; height: 2px; background: #868686; }

.status {
  display: flex;
  flex: none;
  height: 15px;
  border-top: 1px solid #d0d0d0;
  overflow: hidden;
}
.status-text { flex: 1; padding: 3px 0 0 1px; font-size: 12px; line-height: 14px; white-space: nowrap; }
.status-cell { width: 36px; margin-top: 2px; border-left: 1px solid #d4d4d4; }
.status-last { width: 14px; }
```
